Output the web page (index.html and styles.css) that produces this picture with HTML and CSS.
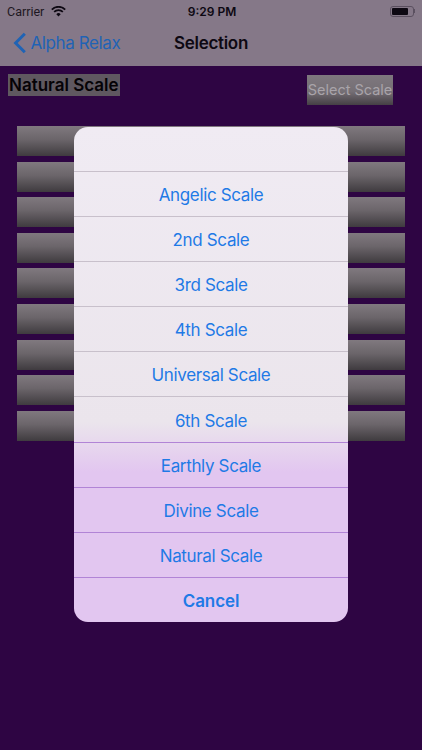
FILE: index.html
```html
<!DOCTYPE html>
<html lang="en">
<head>
<meta charset="utf-8">
<title>Selection</title>
<link rel="stylesheet" href="styles.css">
</head>
<body>
<div class="screen">
  <header class="top">
    <div class="status">
      <div class="status-left">
        <span>Carrier</span>
        <svg class="wifi" viewBox="0 0 16 12" width="15" height="11"><path d="M8 11.5 5.6 8.9a3.4 3.4 0 0 1 4.8 0zM3.9 7.2 2.6 5.8a7.6 7.6 0 0 1 10.8 0l-1.3 1.4a5.8 5.8 0 0 0-8.2 0zM1.4 4.7 0 3.2a11.3 11.3 0 0 1 16 0l-1.4 1.5a9.4 9.4 0 0 0-13.2 0z" fill="#0d0812"/></svg>
      </div>
      <span class="clock">9:29 PM</span>
      <div class="battery"><span class="battery-body"><span class="battery-fill"></span></span><span class="battery-cap"></span></div>
    </div>
    <nav class="nav">
      <div class="back">
        <svg viewBox="0 0 14 22" width="14" height="22"><path d="M11.8 1.8 2.6 11l9.2 9.2" fill="none" stroke="#1f63b5" stroke-width="3"/></svg>
        <span>Alpha Relax</span>
      </div>
      <span class="title">Selection</span>
    </nav>
  </header>
  <main class="content">
    <div class="head-row">
      <span class="current">Natural Scale</span>
      <span class="select-btn">Select Scale</span>
    </div>
    <div class="bars">
      <div class="bar"></div><div class="bar"></div><div class="bar"></div>
      <div class="bar"></div><div class="bar"></div><div class="bar"></div>
      <div class="bar"></div><div class="bar"></div><div class="bar"></div>
    </div>
  </main>
  <div class="sheet">
    <div class="sheet-title"></div>
    <div class="sheet-row">Angelic Scale</div>
    <div class="sheet-row">2nd Scale</div>
    <div class="sheet-row">3rd Scale</div>
    <div class="sheet-row">4th Scale</div>
    <div class="sheet-row">Universal Scale</div>
    <div class="sheet-row">6th Scale</div>
    <div class="sheet-row lilac">Earthly Scale</div>
    <div class="sheet-row lilac">Divine Scale</div>
    <div class="sheet-row lilac">Natural Scale</div>
    <div class="sheet-row lilac cancel">Cancel</div>
  </div>
</div>
</body>
</html>
```
FILE: styles.css
```css
* { box-sizing: border-box; }
html, body { margin: 0; padding: 0; }
body { font-family: "Inter", "Liberation Sans", sans-serif; }
.screen {
  position: relative;
  width: 422px;
  height: 750px;
  overflow: hidden;
  background: #2e0543;
}
.top { height: 66px; background: #857888; color: #0d0812; }
.status {
  height: 22px;
  padding: 0 5px 0 7px;
  display: grid;
  grid-template-columns: 1fr auto 1fr;
  align-items: center;
  font-size: 12px;
}
.status-left { display: flex; align-items: center; gap: 7px; font-family: "Roboto", sans-serif; font-size: 12.5px; color: #1d1722; }
.clock { font-family: "Inter", sans-serif; font-weight: 600; font-size: 12px; }
.battery { justify-self: end; display: flex; align-items: center; margin-right: 2px; }
.battery-body { width: 24px; height: 11px; border: 1px solid #5b5060; border-radius: 3px; padding: 1px; display: block; }
.battery-fill { display: block; width: 16px; height: 7px; background: #0d0812; border-radius: 1px; }
.battery-cap { width: 1.5px; height: 4px; background: #5b5060; }
.nav { position: relative; height: 44px; display: flex; align-items: center; justify-content: center; }
.back {
  position: absolute;
  left: 13px;
  top: 10px;
  display: flex;
  align-items: center;
  gap: 3.5px;
  color: #1f63b5;
  font-size: 17px;
  font-family: "Inter", sans-serif;
  letter-spacing: -0.4px;
}
.title { font-size: 17px; font-weight: 600; letter-spacing: -0.3px; margin-top: -2px; }
.content { padding: 8px 17px 0; }
.head-row { display: flex; justify-content: space-between; height: 52px; margin-left: -9px; margin-right: 12px; }
.current {
  height: 22px;
  padding: 0 0 0 1px;
  background: #5f5860;
  color: #050206;
  font-size: 17px;
  font-weight: 600;
  line-height: 22px;
  width: 112px;
  white-space: nowrap;
}
.select-btn {
  margin-top: 1px;
  width: 86px;
  height: 30px;
  text-align: center;
  line-height: 30px;
  font-size: 14.5px;
  color: #a9a4aa;
  white-space: nowrap;
  background: linear-gradient(#7e777e, #756f75 55%, #454045);
}
.bars { display: flex; flex-direction: column; gap: 5.6px; }
.bar { height: 30px; background: linear-gradient(#80797f, #6b656a 45%, #3f3b3f); }
.sheet {
  position: absolute;
  left: 74px;
  top: 127px;
  width: 274px;
  height: 495px;
  border-radius: 14px;
  overflow: hidden;
  display: flex;
  flex-direction: column;
  background: linear-gradient(#f0ebf3 0, #ebe5ec 295px, #e2c6f0 345px, #e2c6f0 100%);
}
.sheet-title { height: 44px; flex: none; }
.sheet-row {
  flex: 1;
  display: flex;
  align-items: center;
  justify-content: center;
  padding-top: 2px;
  color: #1f7ae6;
  font-size: 17px;
  letter-spacing: -0.35px;
  border-top: 1px solid #c8c0cb;
}
.lilac { border-top-color: #b184d6; }
.cancel { font-weight: 600; letter-spacing: -0.1px; }
```
